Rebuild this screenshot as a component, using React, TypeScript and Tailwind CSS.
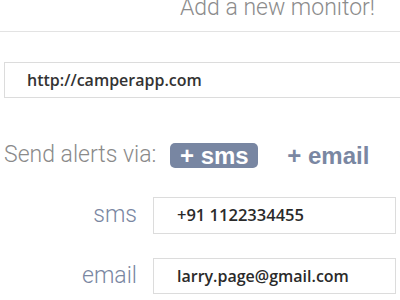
export default function App() {
  return (
    <div className="w-[400px] h-[300px] overflow-hidden bg-white">
      {/* header */}
      <div className="h-[32px] border-b border-[#e3e3e3] flex justify-end pr-[25px]">
        <h1 className="-mt-[4px] font-[Roboto,sans-serif] text-[23px] leading-[23px] font-light text-[#8c8c8c] whitespace-nowrap">
          Add a new monitor!
        </h1>
      </div>

      {/* url */}
      <div className="mt-[30px] ml-[4px] h-[36px] w-[420px] border border-[#dcdcdc] flex items-center pl-[22px]">
        <span className="font-['Open_Sans',sans-serif] text-[16px] font-semibold text-[#333]">http://camperapp.com</span>
      </div>

      {/* alert channels */}
      <div className="mt-[45px] h-[25px] flex items-center pl-[4px] whitespace-nowrap">
        <span className="font-[Roboto,sans-serif] text-[23px] font-light text-[#8a8a8a] mr-[14px]">Send alerts via:</span>
        <span className="h-[25px] w-[88px] shrink-0 rounded-[5px] bg-[#7886a2] text-white font-['Liberation_Sans',Arial,sans-serif] text-[24px] font-bold flex items-center justify-center">
          + sms
        </span>
        <span className="ml-[29px] font-['Liberation_Sans',Arial,sans-serif] text-[24px] font-bold text-[#7a87a2]">+ email</span>
        <span className="ml-[30px] font-['Liberation_Sans',Arial,sans-serif] text-[24px] font-bold text-[#e6e8ee]">+</span>
      </div>

      {/* contact rows */}
      <div className="mt-[29px] flex flex-col gap-[24px]">
        <div className="flex items-center">
          <span className="w-[137px] text-right font-[Roboto,sans-serif] text-[23px] font-light text-[#7a87a2]">sms</span>
          <div className="ml-[16px] h-[37px] w-[243px] border border-[#dcdcdc] flex items-center pl-[23px]">
            <span className="font-['Open_Sans',sans-serif] text-[16.5px] font-semibold text-[#2a2a2a]">+91 1122334455</span>
          </div>
        </div>
        <div className="flex items-center">
          <span className="w-[137px] text-right font-[Roboto,sans-serif] text-[23px] font-light text-[#7a87a2]">email</span>
          <div className="ml-[16px] h-[36px] w-[243px] border border-[#dcdcdc] flex items-center pl-[23px]">
            <span className="font-['Open_Sans',sans-serif] text-[16px] font-semibold text-[#2a2a2a]">larry.page@gmail.com</span>
          </div>
        </div>
      </div>
    </div>
  );
}
